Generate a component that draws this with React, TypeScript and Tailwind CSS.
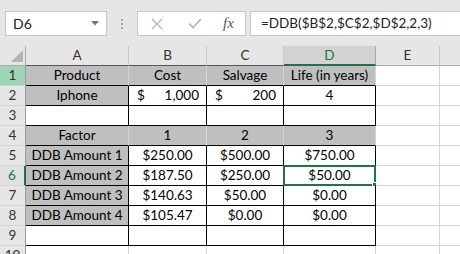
const cols = [
  { l: 'A', w: 'w-[103px]' },
  { l: 'B', w: 'w-[78px]' },
  { l: 'C', w: 'w-[77px]' },
  { l: 'D', w: 'w-[92px]' },
  { l: 'E', w: 'w-[64px]' },
  { l: '', w: 'w-[64px]' },
]

type Cell = { t?: string; acct?: string; fill?: boolean }

const rows: Cell[][] = [
  [{ t: 'Product', fill: true }, { t: 'Cost', fill: true }, { t: 'Salvage', fill: true }, { t: 'Life (in years)', fill: true }],
  [{ t: 'Iphone', fill: true }, { acct: '1,000' }, { acct: '200' }, { t: '4' }],
  [],
  [{ t: 'Factor', fill: true }, { t: '1', fill: true }, { t: '2', fill: true }, { t: '3', fill: true }],
  [{ t: 'DDB Amount 1', fill: true }, { t: '$250.00' }, { t: '$500.00' }, { t: '$750.00' }],
  [{ t: 'DDB Amount 2', fill: true }, { t: '$187.50' }, { t: '$250.00' }, { t: '$50.00' }],
  [{ t: 'DDB Amount 3', fill: true }, { t: '$140.63' }, { t: '$50.00' }, { t: '$0.00' }],
  [{ t: 'DDB Amount 4', fill: true }, { t: '$105.47' }, { t: '$0.00' }, { t: '$0.00' }],
  [],
  [],
]

const boxed = (r: number, c: number) => (r === 1 || r === 2 || (r >= 4 && r <= 8)) && c < 4

function Toolbar() {
  return (
    <div className="flex h-[46px] items-start bg-[#e6e6e6] pt-[11px] pl-[5px]">
      <div className="flex h-[25px] w-[102px] items-center justify-between border border-[#c6c6c6] bg-white pl-[7px] pr-[7px] text-[14px] text-[#222]">
        <span>D6</span>
        <svg width="8" height="5" viewBox="0 0 8 5">
          <path d="M0 0 H8 L4 4.5 Z" fill="#777" />
        </svg>
      </div>
      <div className="flex h-[25px] w-[30px] flex-col items-center justify-center gap-[2px]">
        <span className="h-[2px] w-[2px] bg-[#a6a6a6]" />
        <span className="h-[2px] w-[2px] bg-[#a6a6a6]" />
        <span className="h-[2px] w-[2px] bg-[#a6a6a6]" />
      </div>
      <div className="flex h-[25px] w-[109px] items-center border border-[#c6c6c6] bg-white pl-[13px]">
        <svg width="12" height="12" viewBox="0 0 12 12">
          <path d="M1 1 L11 11 M11 1 L1 11" stroke="#b3b3b3" strokeWidth="1.3" fill="none" />
        </svg>
        <svg className="ml-[25px]" width="14" height="11" viewBox="0 0 14 11">
          <path d="M1 5.5 L5 9.5 L13 1" stroke="#b3b3b3" strokeWidth="1.6" fill="none" />
        </svg>
        <span className="ml-[21px] font-['Liberation_Serif',serif] text-[15px] italic text-[#555]">fx</span>
      </div>
      <div className="ml-[4px] flex h-[25px] flex-1 items-center border border-r-0 border-[#c6c6c6] bg-white pl-[10px] text-[13.5px] text-[#222]">
        =DDB($B$2,$C$2,$D$2,2,3)
      </div>
    </div>
  )
}

function HeaderRow() {
  return (
    <div className="flex h-[20px]">
      <div className="relative h-[20px] w-[26px] shrink-0 border-r border-b border-[#ababab] bg-[#e6e6e6]">
        <svg className="absolute right-[2px] bottom-[3px]" width="12" height="12" viewBox="0 0 12 12">
          <path d="M12 0 V12 H0 Z" fill="#b4b4b4" />
        </svg>
      </div>
      {cols.map((c, i) =>
        i === 3 ? (
          <div
            key={i}
            className={`${c.w} flex h-[20px] shrink-0 items-center justify-center border-r border-b-2 border-r-[#ababab] border-b-[#217346] bg-[#d2d2d2] pt-[1px] text-[#217346]`}
          >
            {c.l}
          </div>
        ) : (
          <div
            key={i}
            className={`${c.w} flex h-[20px] shrink-0 items-center justify-center border-r border-b border-r-[#c8c8c8] bg-[#e6e6e6] text-[#333] ${
              i < 3 ? 'border-b-[#555]' : 'border-b-[#ababab]'
            }`}
          >
            {c.l}
          </div>
        )
      )}
    </div>
  )
}

function Row({ r, cells }: { r: number; cells: Cell[] }) {
  const num = r + 1
  return (
    <div className="flex h-[20px]">
      <div
        className={`flex h-[20px] w-[26px] shrink-0 items-center justify-center border-b border-b-[#d4d4d4] ${
          num === 1
            ? 'border-r border-r-[#9b9b9b] bg-[#9fd5b7] text-[#333]'
            : num === 6
              ? 'border-r-2 border-r-[#217346] bg-[#e1e1e1] text-[#217346]'
              : 'border-r border-r-[#9b9b9b] bg-[#e6e6e6] text-[#333]'
        }`}
      >
        {num}
      </div>
      {cols.map((col, c) => {
        const cell = cells[c] || {}
        const right = boxed(r, c) || boxed(r, c + 1) ? 'border-r-black' : 'border-r-[#d4d4d4]'
        const bottom = boxed(r, c) || boxed(r + 1, c) ? 'border-b-black' : 'border-b-[#d4d4d4]'
        const sel = r === 5 && c === 3
        return (
          <div
            key={c}
            className={`${col.w} relative flex h-[20px] shrink-0 items-center border-r border-b ${right} ${bottom} ${
              cell.fill ? 'bg-[#bfbfbf]' : 'bg-white'
            } ${cell.acct ? 'justify-between pr-[7px] pl-[8px]' : 'justify-center'} text-black`}
          >
            {cell.acct ? (
              <>
                <span>$</span>
                <span>{cell.acct}</span>
              </>
            ) : (
              <span className="whitespace-nowrap">{cell.t}</span>
            )}
            {sel && (
              <>
                <div className="absolute -top-[1px] -left-[1px] h-[21px] w-[93px] border-2 border-[#217346]" />
                <div className="absolute -right-[4px] -bottom-[4px] h-[7px] w-[7px] border border-white bg-[#217346]" />
              </>
            )}
          </div>
        )
      })}
    </div>
  )
}

export default function App() {
  return (
    <div className="h-[254px] w-[460px] overflow-hidden bg-white font-['Lato',sans-serif] text-[13.5px] leading-none">
      <Toolbar />
      <HeaderRow />
      {rows.map((cells, r) => (
        <Row key={r} r={r} cells={cells} />
      ))}
    </div>
  )
}
